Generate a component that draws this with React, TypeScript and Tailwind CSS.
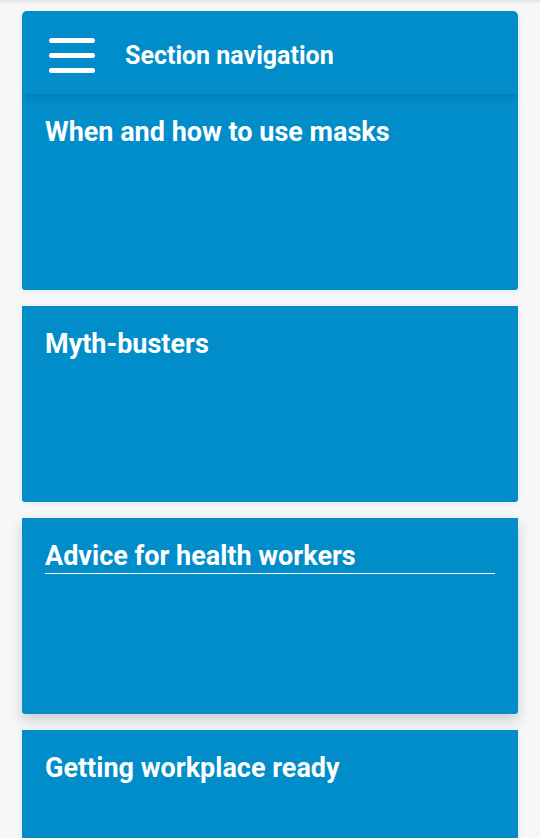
export default function App() {
  const items = [
    { title: "When and how to use masks", active: false },
    { title: "Myth-busters", active: false },
    { title: "Advice for health workers", active: true },
    { title: "Getting workplace ready", active: false },
  ];

  return (
    <div
      className="h-[838px] overflow-hidden bg-[#f7f7f7] pt-[11px] px-[22px]"
      style={{ fontFamily: "Roboto, 'Liberation Sans', sans-serif" }}
    >
      <div className="fixed top-0 left-0 right-0 h-[4px] bg-gradient-to-b from-[#e2e2e2] to-transparent" />
      {/* Header */}
      <div className="relative z-10 h-[83px] rounded-t-[5px] bg-[#008dc9] shadow-[0_3px_5px_rgba(0,0,0,0.12)] flex items-center pl-[27px] pt-[6px]">
        <div className="flex flex-col gap-[10px]">
          <span className="block w-[46px] h-[5px] rounded-full bg-white" />
          <span className="block w-[46px] h-[5px] rounded-full bg-white" />
          <span className="block w-[46px] h-[5px] rounded-full bg-white" />
        </div>
        <span className="ml-[30px] text-[25px] font-bold text-white">
          Section navigation
        </span>
      </div>

      {/* Cards */}
      <div className="flex flex-col gap-[16px]">
        {items.map((item) => (
          <div
            key={item.title}
            className={`h-[196px] shrink-0 bg-[#008dc9] px-[23px] pt-[22px] rounded-b-[3px] ${
              item.active
                ? "shadow-[0_6px_14px_rgba(0,0,0,0.18)]"
                : "shadow-[0_1px_6px_rgba(0,0,0,0.08)]"
            }`}
          >
            <div
              className={`text-[27px] leading-[32px] font-bold text-white ${
                item.active ? "border-b border-white pb-[1px]" : ""
              }`}
            >
              {item.title}
            </div>
          </div>
        ))}
      </div>
    </div>
  );
}
